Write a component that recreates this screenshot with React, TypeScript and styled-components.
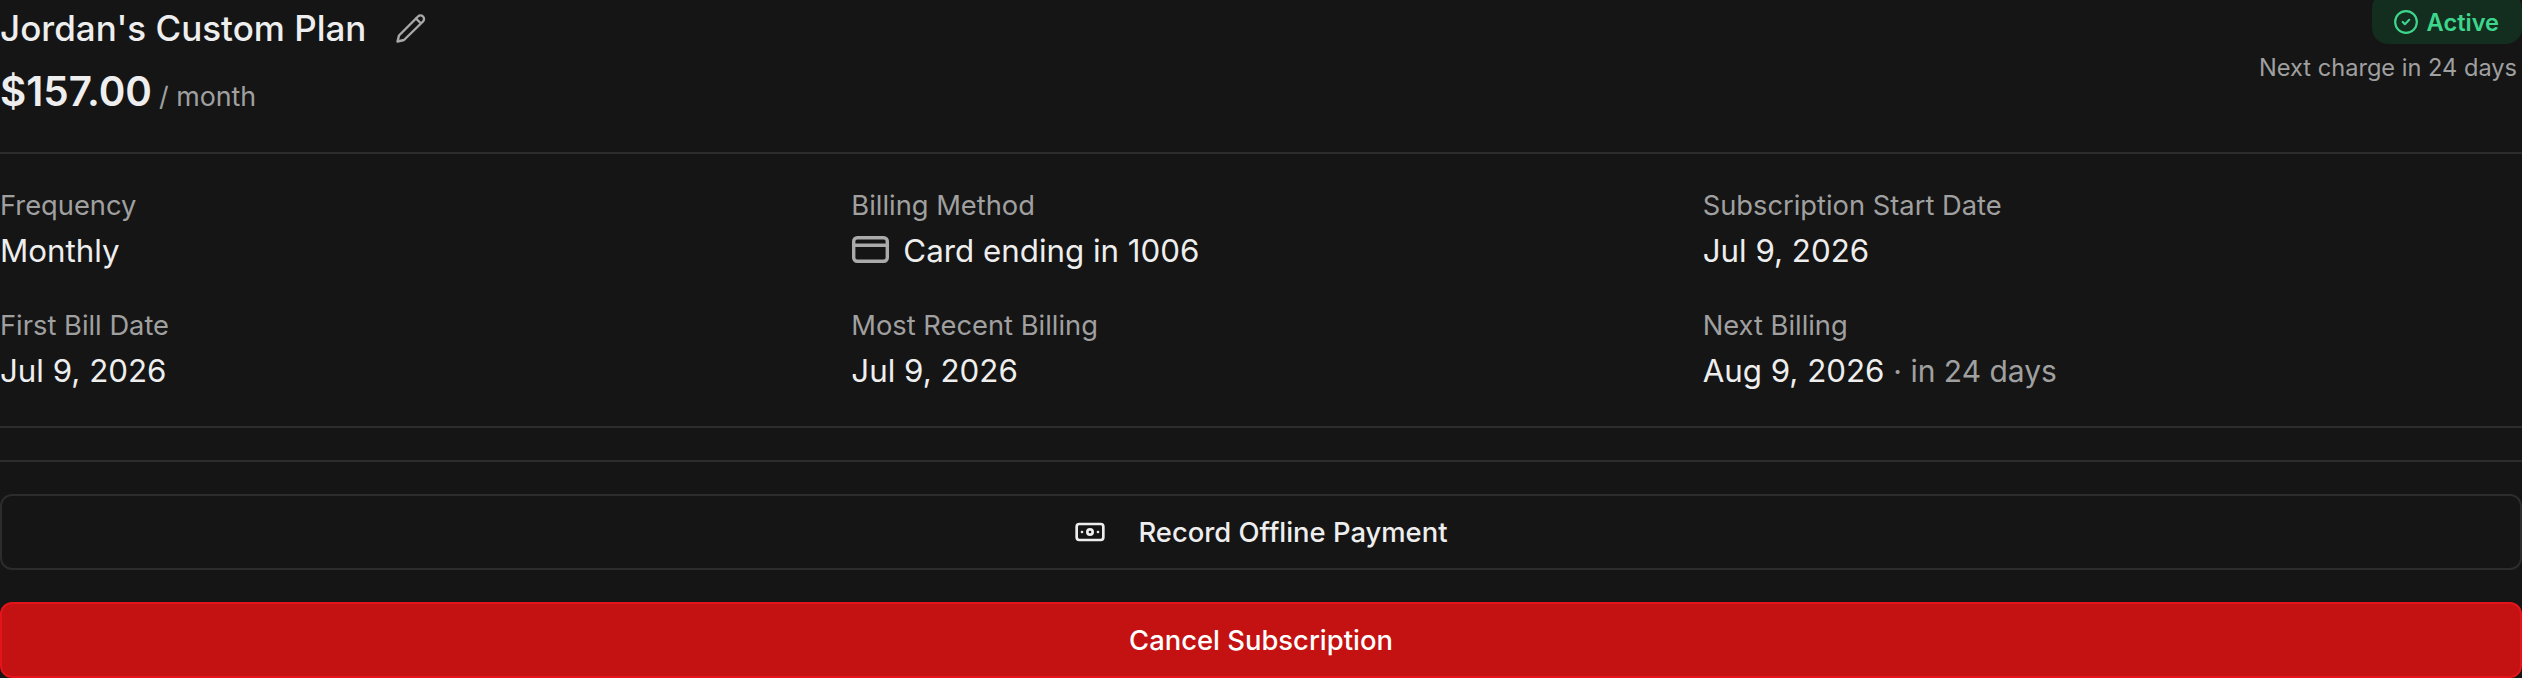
import React from 'react';
import styled, { createGlobalStyle } from 'styled-components';

const Global = createGlobalStyle`
  html, body { margin: 0; padding: 0; background: #151515; }
  body { font-family: Inter, "Noto Sans", sans-serif; -webkit-font-smoothing: antialiased; }
`;

const Page = styled.div`
  width: 2522px;
  height: 678px;
  background: #151515;
  overflow: hidden;
`;

const Header = styled.header`
  display: flex;
  justify-content: space-between;
  align-items: flex-start;
  height: 152px;
  border-bottom: 2px solid #2c2c2c;
`;

const TitleBlock = styled.div`
  display: flex;
  flex-direction: column;
`;

const TitleRow = styled.div`
  display: flex;
  align-items: center;
  gap: 30px;
  height: 56px;
`;

const Title = styled.h2`
  margin: 0;
  font-size: 35px;
  line-height: 56px;
  font-weight: 500;
  color: #eeeeee;
`;

const PriceRow = styled.div`
  display: flex;
  align-items: baseline;
  gap: 7px;
  margin-top: 8px;
`;

const Price = styled.span`
  font-size: 40.4px;
  line-height: 56px;
  font-weight: 600;
  color: #eeeeee;
`;

const Period = styled.span`
  font-size: 26.8px;
  color: #a0a0a0;
`;

const Status = styled.div`
  display: flex;
  flex-direction: column;
  align-items: flex-end;
`;

const Badge = styled.div`
  display: flex;
  align-items: center;
  gap: 8px;
  height: 52px;
  margin-top: -8px;
  padding: 8px 23px 0 21px;
  box-sizing: border-box;
  border-radius: 16px;
  background: #132d1f;
  color: #3dd68c;
  font-size: 23.6px;
  font-weight: 600;
`;

const NextCharge = styled.div`
  margin-top: 8px;
  padding-right: 5px;
  font-size: 23.6px;
  line-height: 32px;
  color: #a0a0a0;
`;

const Details = styled.section`
  display: grid;
  grid-template-columns: repeat(3, 1fr);
  column-gap: 32px;
  row-gap: 33px;
  padding: 32px 0 0;
  height: 274px;
  box-sizing: border-box;
  border-bottom: 2px solid #2c2c2c;
  align-content: start;
`;

const Field = styled.div`
  display: flex;
  flex-direction: column;
  gap: 3px;
`;

const Label = styled.div`
  font-size: 27.3px;
  line-height: 40px;
  color: #a0a0a0;
`;

const Value = styled.div`
  display: flex;
  align-items: center;
  gap: 12px;
  font-size: 31.3px;
  line-height: 44px;
  color: #eeeeee;
`;

const Muted = styled.span`
  font-size: 30px;
  color: #a0a0a0;
`;

const Divider = styled.div`
  height: 2px;
  margin-top: 32px;
  background: #2c2c2c;
`;

const Actions = styled.div`
  display: flex;
  flex-direction: column;
  gap: 32px;
  margin-top: 32px;
`;

const Button = styled.button<{ $danger?: boolean }>`
  display: flex;
  align-items: center;
  justify-content: center;
  gap: 32px;
  width: 100%;
  height: 76px;
  border-radius: 12px;
  border: 2px solid ${p => (p.$danger ? '#e5141a' : '#2c2c2c')};
  background: ${p => (p.$danger ? '#c41111' : 'transparent')};
  color: ${p => (p.$danger ? '#ffffff' : '#eeeeee')};
  font-family: inherit;
  font-size: 27.4px;
  font-weight: 450;
`;

const Icon = styled.svg<{ $size: number; $color: string }>`
  width: ${p => p.$size}px;
  height: ${p => p.$size}px;
  flex: none;
  color: ${p => p.$color};
`;

const stroke = { fill: 'none', stroke: 'currentColor', strokeLinecap: 'round', strokeLinejoin: 'round' } as const;

export default function App() {
  return (
    <Page>
      <Global />
      <Header>
        <TitleBlock>
          <TitleRow>
            <Title>Jordan's Custom Plan</Title>
            <Icon $size={30} $color="#a8a8a8" viewBox="0 0 30 30" {...stroke} strokeWidth={2.4}>
              <path d="M1.5 28.5 3 22.5 22 3.5a3.5 3.5 0 0 1 5 5L8 27z" />
              <path d="M20 5.5l4.5 4.5" />
            </Icon>
          </TitleRow>
          <PriceRow>
            <Price>$157.00</Price>
            <Period>/ month</Period>
          </PriceRow>
        </TitleBlock>
        <Status>
          <Badge>
            <Icon $size={26} $color="#3dd68c" viewBox="0 0 24 24" {...stroke} strokeWidth={2}>
              <circle cx="12" cy="12" r="10" />
              <path d="m9 12 2 2 4-4" />
            </Icon>
            Active
          </Badge>
          <NextCharge>Next charge in 24 days</NextCharge>
        </Status>
      </Header>
      <Details>
        <Field>
          <Label>Frequency</Label>
          <Value>Monthly</Value>
        </Field>
        <Field>
          <Label>Billing Method</Label>
          <Value>
            <Icon $size={40} $color="#aaaaaa" viewBox="0 0 40 40" {...stroke} strokeWidth={3.4}>
              <rect x="2.7" y="6.7" width="33.6" height="23.6" rx="3.5" />
              <path d="M2.7 14.2h33.6" />
            </Icon>
            Card ending in 1006
          </Value>
        </Field>
        <Field>
          <Label>Subscription Start Date</Label>
          <Value>Jul 9, 2026</Value>
        </Field>
        <Field>
          <Label>First Bill Date</Label>
          <Value>Jul 9, 2026</Value>
        </Field>
        <Field>
          <Label>Most Recent Billing</Label>
          <Value>Jul 9, 2026</Value>
        </Field>
        <Field>
          <Label>Next Billing</Label>
          <Value>
            <span>
              Aug 9, 2026 <Muted>· in 24 days</Muted>
            </span>
          </Value>
        </Field>
      </Details>
      <Divider />
      <Actions>
        <Button>
          <Icon $size={32} $color="#eeeeee" viewBox="0 0 24 24" {...stroke} strokeWidth={2}>
            <rect x="2" y="6" width="20" height="12" rx="2" />
            <circle cx="12" cy="12" r="2" />
            <path d="M6 12h.01M18 12h.01" />
          </Icon>
          Record Offline Payment
        </Button>
        <Button $danger>Cancel Subscription</Button>
      </Actions>
    </Page>
  );
}
